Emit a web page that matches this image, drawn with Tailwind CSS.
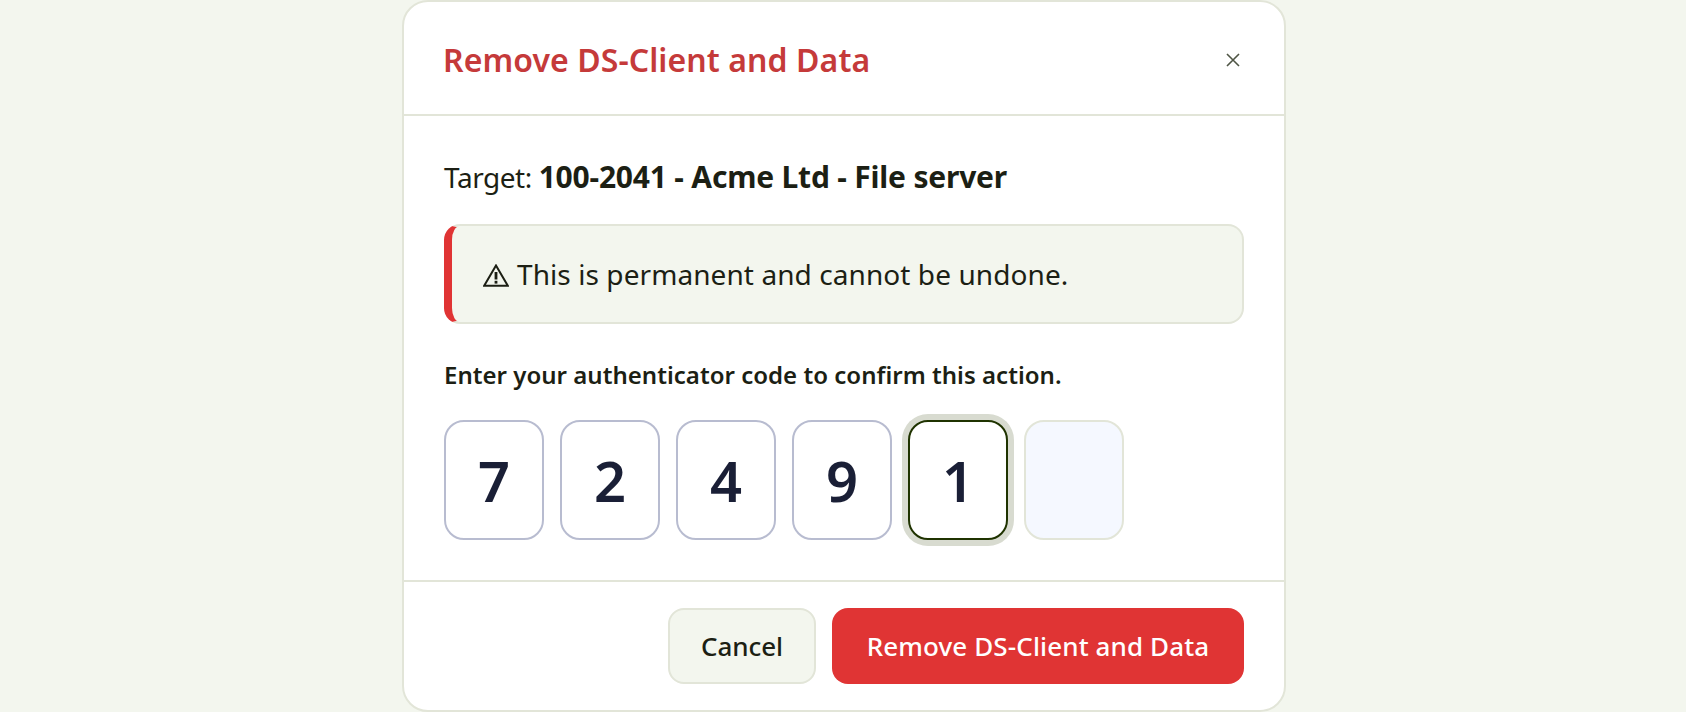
<!DOCTYPE html>
<html lang="en">
<head>
<meta charset="utf-8">
<script src="https://cdn.jsdelivr.net/npm/@tailwindcss/browser@4"></script>
<title>Remove DS-Client and Data</title>
</head>
<body class="bg-[#f3f6ee] h-[712px] overflow-hidden font-['Noto_Sans',sans-serif] text-[#1c1f14]">
<div class="ml-[402px] w-[884px] h-[712px] bg-white border-2 border-[#e2e5d8] rounded-[26px] flex flex-col overflow-hidden">
  <header class="h-[114px] shrink-0 border-b-2 border-[#e2e5d8] flex items-center justify-between pl-[39px] pr-[43px] pt-[3px]">
    <h2 class="text-[32px] font-semibold text-[#c53a3a] leading-none tracking-[0.08px]">Remove DS-Client and Data</h2>
    <button class="w-[16px] h-[16px] flex justify-center items-center text-[#4f5545]">
      <svg viewBox="0 0 14 14" class="w-[14px] h-[14px]" fill="none" stroke="currentColor" stroke-width="1.6"><path d="M1 1 L13 13 M13 1 L1 13"/></svg>
    </button>
  </header>
  <main class="flex-1 px-[40px] pt-[43px]">
    <p class="text-[28px] leading-[36px] tracking-[-0.45px]">Target: <strong class="font-bold text-[30px] tracking-[-0.2px]">100-2041 - Acme Ltd - File server</strong></p>
    <div class="mt-[29px] h-[100px] w-[800px] rounded-[16px] border-2 border-l-[8px] border-[#e2e5d8] border-l-[#e03434] bg-[#f3f6ee] flex items-center gap-[8px] pl-[31px] text-[28px] tracking-[0.08px]">
      <svg viewBox="0 0 26 23" class="w-[26px] h-[23px] mt-[3px] shrink-0" fill="none"><path d="M13 1.5 L24.8 21.8 H1.2 Z" stroke="#1c1f14" stroke-width="2" stroke-linejoin="miter"/><rect x="11.6" y="8" width="2.8" height="7.5" fill="#1c1f14"/><rect x="11.6" y="16.8" width="2.8" height="2.8" fill="#1c1f14"/></svg>
      <span>This is permanent and cannot be undone.</span>
    </div>
    <p class="mt-[35px] text-[24px] font-semibold leading-[32px] tracking-[0.02px]">Enter your authenticator code to confirm this action.</p>
    <div class="mt-[29px] flex gap-[16px] text-[56px] font-semibold text-[#1a1f36]">
      <div class="w-[100px] h-[120px] rounded-[20px] border-2 border-[#b8bcd0] bg-white flex items-center justify-center">7</div>
      <div class="w-[100px] h-[120px] rounded-[20px] border-2 border-[#b8bcd0] bg-white flex items-center justify-center">2</div>
      <div class="w-[100px] h-[120px] rounded-[20px] border-2 border-[#b8bcd0] bg-white flex items-center justify-center">4</div>
      <div class="w-[100px] h-[120px] rounded-[20px] border-2 border-[#b8bcd0] bg-white flex items-center justify-center">9</div>
      <div class="w-[100px] h-[120px] rounded-[20px] border-2 border-[#1f3300] bg-white flex items-center justify-center ring-[6px] ring-[#d8dbd0]">1</div>
      <div class="w-[100px] h-[120px] rounded-[20px] border-2 border-[#e2e5d8] bg-[#f5f8ff]"></div>
    </div>
  </main>
  <footer class="h-[130px] shrink-0 border-t-2 border-[#e2e5d8] flex items-start justify-end gap-[16px] pt-[26px] pr-[40px]">
    <button class="w-[148px] h-[76px] rounded-[16px] border-2 border-[#e2e5d8] bg-[#f3f6ee] text-[26px] font-medium tracking-[-0.1px]">Cancel</button>
    <button class="w-[412px] h-[76px] rounded-[16px] bg-[#e03434] text-white text-[26px] font-medium tracking-[0.12px]">Remove DS-Client and Data</button>
  </footer>
</div>
</body>
</html>
